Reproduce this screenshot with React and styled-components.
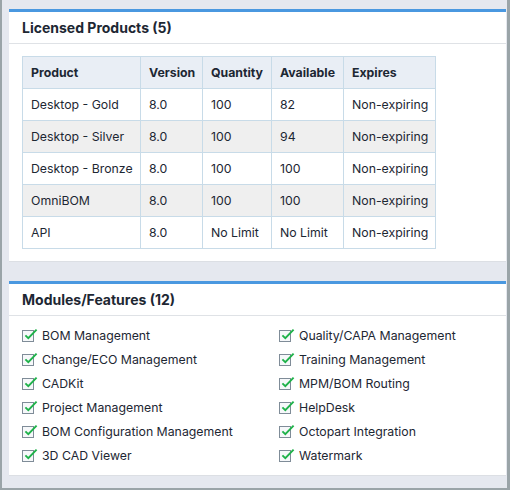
import React from "react";
import styled, { createGlobalStyle } from "styled-components";

const GlobalStyle = createGlobalStyle`
  html, body {
    margin: 0;
    padding: 0;
    background: #e5e8ef;
  }
  * {
    box-sizing: border-box;
  }
`;

const Frame = styled.div`
  width: 510px;
  height: 490px;
  background: #e5e8ef;
  border-left: 2px solid #9aa4a8;
  border-right: 3px solid #9aa4a8;
  border-bottom: 2px solid #9aa4a8;
  padding: 9px 1px 0 7px;
  display: flex;
  flex-direction: column;
  gap: 19px;
  font-family: Inter, "Liberation Sans", sans-serif;
  color: #1d2733;
`;

const Panel = styled.section`
  background: #fff;
  border-top: 3px solid #4a98e0;
  border-bottom: 1px solid #dcdfe4;
`;

const PanelHeader = styled.h2`
  margin: 0;
  height: 32px;
  padding: 0 13px;
  display: flex;
  align-items: center;
  font-size: 14px;
  font-weight: 700;
  border-bottom: 1px solid #dfe2e6;
`;

const PanelBody = styled.div`
  padding: ${(p) => p.$pad || "12px 13px 12px"};
`;

const Table = styled.table`
  border-collapse: collapse;
  font-size: 12.3px;
  table-layout: fixed;
  width: 413px;
`;

const Th = styled.th`
  background: #e9eef5;
  text-align: left;
  font-weight: 700;
  height: 32px;
  padding: 0 8px;
  border: 1px solid #c8dbe8;
  white-space: nowrap;
`;

const Td = styled.td`
  height: 32px;
  padding: 0 8px;
  border: 1px solid #c8dbe8;
  white-space: nowrap;
`;

const Row = styled.tr`
  background: ${(p) => (p.$striped ? "#efefef" : "#fff")};
`;

const Features = styled.ul`
  list-style: none;
  margin: 0;
  padding: 0;
  display: grid;
  grid-template-columns: 257px 1fr;
  grid-auto-flow: column;
  grid-template-rows: repeat(6, 24px);
`;

const Feature = styled.li`
  display: flex;
  align-items: center;
  gap: 4px;
  font-size: 12.3px;
`;

const CheckIcon = () => (
  <svg width="16" height="14" viewBox="0 0 16 14">
    <rect x="0.5" y="2.5" width="11" height="11" fill="#f6f8fa" stroke="#7f8c98" />
    <path d="M3.4 7.4 L6.3 10.2 L14.6 1.6" fill="none" stroke="#1fb24a" strokeWidth="1.9" />
  </svg>
);

const products = [
  ["Desktop - Gold", "8.0", "100", "82", "Non-expiring"],
  ["Desktop - Silver", "8.0", "100", "94", "Non-expiring"],
  ["Desktop - Bronze", "8.0", "100", "100", "Non-expiring"],
  ["OmniBOM", "8.0", "100", "100", "Non-expiring"],
  ["API", "8.0", "No Limit", "No Limit", "Non-expiring"],
];

const columns = [
  ["Product", 118],
  ["Version", 62],
  ["Quantity", 69],
  ["Available", 72],
  ["Expires", 92],
];

const features = [
  "BOM Management",
  "Change/ECO Management",
  "CADKit",
  "Project Management",
  "BOM Configuration Management",
  "3D CAD Viewer",
  "Quality/CAPA Management",
  "Training Management",
  "MPM/BOM Routing",
  "HelpDesk",
  "Octopart Integration",
  "Watermark",
];

const App = () => (
  <>
    <GlobalStyle />
    <Frame>
      <Panel>
        <PanelHeader>Licensed Products (5)</PanelHeader>
        <PanelBody>
          <Table>
            <colgroup>
              {columns.map(([name, w]) => (
                <col key={name} style={{ width: w }} />
              ))}
            </colgroup>
            <thead>
              <tr>
                {columns.map(([name]) => (
                  <Th key={name}>{name}</Th>
                ))}
              </tr>
            </thead>
            <tbody>
              {products.map((row, i) => (
                <Row key={row[0]} $striped={i % 2 === 1}>
                  {row.map((cell, j) => (
                    <Td key={j}>{cell}</Td>
                  ))}
                </Row>
              ))}
            </tbody>
          </Table>
        </PanelBody>
      </Panel>
      <Panel>
        <PanelHeader>Modules/Features (12)</PanelHeader>
        <PanelBody $pad="7px 13px 8px">
          <Features>
            {features.map((f) => (
              <Feature key={f}>
                <CheckIcon />
                {f}
              </Feature>
            ))}
          </Features>
        </PanelBody>
      </Panel>
    </Frame>
  </>
);

export default App;
